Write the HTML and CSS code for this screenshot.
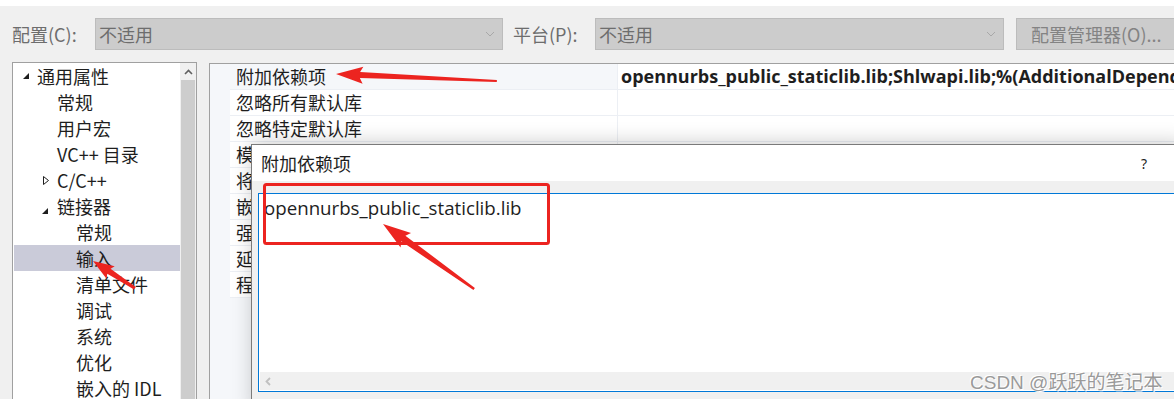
FILE: index.html
```html
<!DOCTYPE html>
<html lang="zh-CN">

<head>
    <meta charset="UTF-8">
    <title>属性页</title>
    <link rel="stylesheet" href="styles.css">
</head>

<body>
    <div class="topline"></div>

    <!-- 配置 / 平台 工具条 -->
    <div class="toolbar">
        <span class="tb-label">配置(C):</span>
        <div class="combo combo-config">
            <span>不适用</span>
            <svg class="combo-arrow" width="10" height="6" viewBox="0 0 10 6"><path d="M1 1 L5 5 L9 1" fill="none" stroke="#a8a8a8" stroke-width="1"/></svg>
        </div>
        <span class="tb-label tb-label-platform">平台(P):</span>
        <div class="combo combo-platform">
            <span>不适用</span>
            <svg class="combo-arrow" width="10" height="6" viewBox="0 0 10 6"><path d="M1 1 L5 5 L9 1" fill="none" stroke="#a8a8a8" stroke-width="1"/></svg>
        </div>
        <div class="tb-button">配置管理器(O)...</div>
    </div>

    <div class="main">
        <!-- 左侧树 -->
        <div class="tree">
            <ul class="tree-list">
                <li class="lvl0"><svg class="tog tog-open" width="6" height="6" viewBox="0 0 6 6"><path d="M6 0 L6 6 L0 6 Z" fill="#1e1e1e"/></svg>通用属性</li>
                <li class="lvl1">常规</li>
                <li class="lvl1">用户宏</li>
                <li class="lvl1">VC++ 目录</li>
                <li class="lvl1"><svg class="tog tog-closed" width="6" height="9" viewBox="0 0 6 9"><path d="M0.5 0.5 L5.5 4.5 L0.5 8.5 Z" fill="none" stroke="#1e1e1e" stroke-width="1"/></svg>C/C++</li>
                <li class="lvl1"><svg class="tog tog-open" width="6" height="6" viewBox="0 0 6 6"><path d="M6 0 L6 6 L0 6 Z" fill="#1e1e1e"/></svg>链接器</li>
                <li class="lvl2">常规</li>
                <li class="lvl2 selected">输入</li>
                <li class="lvl2">清单文件</li>
                <li class="lvl2">调试</li>
                <li class="lvl2">系统</li>
                <li class="lvl2">优化</li>
                <li class="lvl2">嵌入的 IDL</li>
                <li class="lvl2">Windows 元数据</li>
            </ul>
            <div class="vscroll">
                <div class="vscroll-btn">
                    <svg width="9" height="6" viewBox="0 0 9 6"><path d="M1 5 L4.5 1.5 L8 5" fill="none" stroke="#606060" stroke-width="1.6"/></svg>
                </div>
                <div class="vscroll-thumb"></div>
            </div>
        </div>

        <!-- 右侧属性表 -->
        <div class="grid">
            <div class="row row-first">
                <div class="name">附加依赖项</div>
                <div class="value">opennurbs_public_staticlib.lib;Shlwapi.lib;%(AdditionalDependencies)</div>
            </div>
            <div class="row"><div class="name">忽略所有默认库</div><div class="value"></div></div>
            <div class="row"><div class="name">忽略特定默认库</div><div class="value"></div></div>
            <div class="row"><div class="name">模块定义文件</div><div class="value"></div></div>
            <div class="row"><div class="name">将模块添加到程序集</div><div class="value"></div></div>
            <div class="row"><div class="name">嵌入托管资源文件</div><div class="value"></div></div>
            <div class="row"><div class="name">强制符号引用</div><div class="value"></div></div>
            <div class="row"><div class="name">延迟加载的 DLL</div><div class="value"></div></div>
            <div class="row"><div class="name">程序集链接资源</div><div class="value"></div></div>
        </div>
    </div>

    <!-- 弹出的 附加依赖项 对话框 -->
    <div class="dialog">
        <div class="dialog-title">
            <span>附加依赖项</span>
            <span class="dialog-help">?</span>
        </div>
        <div class="dialog-body">
            <div class="editbox">
                <div class="editbox-text">opennurbs_public_staticlib.lib</div>
                <div class="hscroll">
                    <svg width="6" height="9" viewBox="0 0 6 9"><path d="M5 1 L1.5 4.5 L5 8" fill="none" stroke="#c0c0c0" stroke-width="1.8"/></svg>
                </div>
            </div>
        </div>
    </div>

    <!-- 红色标注 -->
    <svg class="marks" width="1174" height="399" viewBox="0 0 1174 399">
        <g fill="#ec2420">
            <polygon transform="translate(336,74) rotate(2.5)" points="0,0 27,-8.5 24,-3 161,-1 161,1 24,3 27,8.5"/>
            <polygon transform="translate(383,224) rotate(35.5)" points="0,0 28,-9 25,-3.5 112,-1.2 112,1.2 25,3.5 28,9"/>
            <polygon transform="translate(93,261) rotate(33)" points="0,0 21,-7.5 19,-3 50,-1.5 50,1.5 19,3 21,7.5"/>
        </g>
        <rect x="264.5" y="184.5" width="284" height="59" rx="2" fill="none" stroke="#ec2420" stroke-width="3"/>
    </svg>

    <div class="watermark">CSDN @跃跃的笔记本</div>
</body>

</html>
```

FILE: styles.css
```css
* {
    padding: 0;
    margin: 0;
    box-sizing: border-box;
}

html {
    overflow: hidden;
}

body {
    width: 1174px;
    height: 399px;
    overflow: hidden;
    position: relative;
    background-color: #f0f0f0;
    color: #1e1e1e;
    font-family: "Noto Sans CJK SC", "Noto Sans", sans-serif;
    font-size: 18px;
}

.topline {
    height: 6px;
    background-color: #fff;
}

/* 工具条 */
.toolbar {
    display: flex;
    align-items: center;
    height: 57px;
    padding: 12px 0 13px 12px;
    overflow: hidden;
}

.toolbar > * {
    flex-shrink: 0;
}

.tb-label {
    width: 83px;
    color: #6d6d6d;
    line-height: 32px;
}

.tb-label-platform {
    margin-left: 10px;
    width: 82px;
}

.combo {
    display: flex;
    align-items: center;
    justify-content: space-between;
    height: 32px;
    padding: 0 7px 0 3px;
    background-color: #cccccc;
    border: 1px solid #bcbcbc;
    color: #6d6d6d;
}

.combo-config {
    width: 408px;
}

.combo-platform {
    width: 409px;
}

.tb-button {
    margin-left: 12px;
    width: 170px;
    height: 32px;
    line-height: 30px;
    padding-left: 14px;
    background-color: #cccccc;
    border: 1px solid #bcbcbc;
    color: #838383;
    white-space: nowrap;
}

/* 主区域 */
.main {
    display: flex;
    align-items: flex-start;
}

.tree {
    display: flex;
    flex-shrink: 0;
    margin-left: 12px;
    width: 185px;
    height: 340px;
    margin-top: -1px;
    border: 1px solid #a0a0a0;
    background-color: #fff;
}

.tree-list {
    list-style: none;
    width: 167px;
    padding: 0 0 0 1px;
}

.tree-list li {
    position: relative;
    height: 26px;
    line-height: 26px;
    white-space: nowrap;
    overflow: hidden;
}

.tree-list .lvl0 {
    padding-left: 23px;
}

.tree-list .lvl1 {
    padding-left: 43px;
}

.tree-list .lvl2 {
    padding-left: 62px;
}

.tree-list .selected {
    background-color: #cacbd9;
}

/* 展开 / 折叠 三角 */
.tog {
    position: absolute;
}

.lvl0 .tog-open {
    left: 9px;
    top: 10px;
}

.lvl1 .tog-open {
    left: 28px;
    top: 15px;
}

.lvl1 .tog-closed {
    left: 29px;
    top: 9px;
}

.vscroll {
    width: 16px;
    background-color: #f0f0f0;
    display: flex;
    flex-direction: column;
}

.vscroll-btn {
    height: 17px;
    display: flex;
    justify-content: center;
    align-items: center;
}

.vscroll-thumb {
    flex: 1;
    margin: 0 1px;
    background-color: #cdcdcd;
}

/* 属性表 */
.grid {
    flex: 1;
    margin-left: 12px;
    height: 340px;
    border-top: 1px solid #a0a0a0;
    border-left: 1px solid #a0a0a0;
    background-color: #f5f7fa;
    padding-left: 20px;
}

.row {
    display: flex;
    height: 26px;
    line-height: 25px;
    border-bottom: 1px solid #eceff4;
}

.row .name {
    width: 387px;
    flex-shrink: 0;
    padding-left: 6px;
    background-color: #fff;
    white-space: nowrap;
    overflow: hidden;
}

.row-first .name {
    background-color: #f5f7fa;
}

.row .value {
    flex: 1;
    padding-left: 3px;
    background-color: #fff;
    border-left: 1px solid #eceff4;
    white-space: nowrap;
    overflow: hidden;
    font-family: "Open Sans", "Noto Sans", sans-serif;
    font-weight: bold;
    font-size: 18px;
}

/* 对话框 */
.dialog {
    position: absolute;
    left: 251px;
    top: 144px;
    width: 933px;
    height: 270px;
    border: 1px solid #7a7a7a;
    background-color: #f0f0f0;
    box-shadow: 0 -3px 18px rgba(0, 0, 0, 0.18);
}

.dialog-title {
    display: flex;
    align-items: center;
    height: 36px;
    padding-left: 9px;
    background-color: #fff;
}

.dialog-help {
    margin-left: auto;
    margin-right: 36px;
    font-family: "Noto Sans", sans-serif;
    font-size: 14px;
}

.dialog-body {
    padding: 12px 0 0 6px;
}

.editbox {
    display: flex;
    flex-direction: column;
    height: 199px;
    padding: 0 1px 1px 1px;
    border: 1px solid #0078d7;
    background-color: #fff;
}

.editbox-text {
    flex: 1;
    padding: 1px 0 0 4px;
    line-height: 25px;
    font-family: "Open Sans", "Noto Sans", sans-serif;
    font-size: 18.7px;
}

.hscroll {
    height: 18px;
    padding-left: 5px;
    display: flex;
    align-items: center;
    background-color: #f0f0f0;
}

/* 标注 */
.marks {
    position: absolute;
    left: 0;
    top: 0;
    pointer-events: none;
}

.watermark {
    position: absolute;
    left: 970px;
    top: 367px;
    color: #9a9a9a;
    font-size: 19px;
    font-family: "Liberation Sans", "Noto Sans CJK SC", sans-serif;
    text-shadow: 1px 1px 0 #fff, -1px -1px 0 #fff;
}
```
